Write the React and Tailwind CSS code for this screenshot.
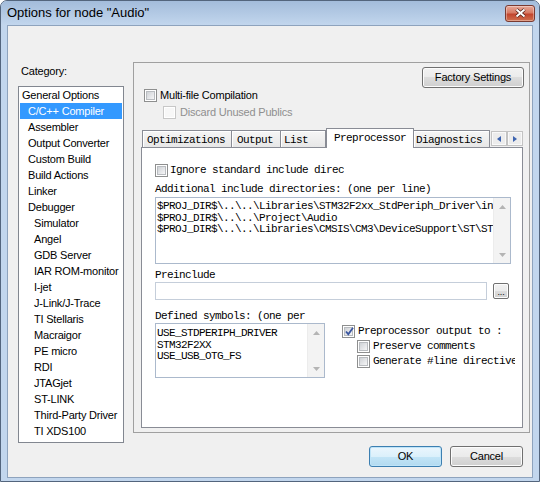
import React from 'react';

const ui = "font-['Liberation_Sans',Arial,sans-serif] text-[11px] tracking-[-0.2px] text-black";
const mono = "font-['Liberation_Mono','Courier_New',monospace] text-[11px] tracking-[-0.6px] text-black";

const categories = [
  ['General Options', 0],
  ['C/C++ Compiler', 1],
  ['Assembler', 1],
  ['Output Converter', 1],
  ['Custom Build', 1],
  ['Build Actions', 1],
  ['Linker', 1],
  ['Debugger', 1],
  ['Simulator', 2],
  ['Angel', 2],
  ['GDB Server', 2],
  ['IAR ROM-monitor', 2],
  ['I-jet', 2],
  ['J-Link/J-Trace', 2],
  ['TI Stellaris', 2],
  ['Macraigor', 2],
  ['PE micro', 2],
  ['RDI', 2],
  ['JTAGjet', 2],
  ['ST-LINK', 2],
  ['Third-Party Driver', 2],
  ['TI XDS100', 2],
];

const indent = ['pl-[2px]', 'pl-[8px]', 'pl-[14px]'];

const tabs = [
  { label: 'Optimizations', cls: 'w-[90px] pl-[4px] border-l' },
  { label: 'Output', cls: 'w-[49px] pl-[5px]' },
  { label: 'List', cls: 'w-[45px] pl-[3px]' },
  { label: 'Preprocessor', cls: 'w-[88px] pl-[7px]', active: true },
  { label: 'Diagnostics', cls: 'w-[76px] pl-[2px]' },
];

const includeDirs = [
  '$PROJ_DIR$\\..\\..\\Libraries\\STM32F2xx_StdPeriph_Driver\\inc',
  '$PROJ_DIR$\\..\\..\\Project\\Audio',
  '$PROJ_DIR$\\..\\..\\Libraries\\CMSIS\\CM3\\DeviceSupport\\ST\\STM32F2xx',
];

const symbols = ['USE_STDPERIPH_DRIVER', 'STM32F2XX', 'USE_USB_OTG_FS'];

function CheckBox({ checked = false, disabled = false }) {
  return (
    <span
      className={`relative flex h-[13px] w-[13px] shrink-0 items-center justify-center border bg-white ${
        disabled ? 'border-[#c7c7c7]' : 'border-[#8e8f8f]'
      }`}
    >
      {disabled ? (
        <span className="h-[9px] w-[9px] bg-[#f7f7f7]" />
      ) : (
        <span className="h-[9px] w-[9px] border border-[#b9bcc0] bg-gradient-to-br from-[#cfd2d6] to-[#f6f6f7]" />
      )}
      {checked && (
        <svg className="absolute left-[1px] top-[0px]" width="11" height="11" viewBox="0 0 11 11">
          <path d="M2 5.5 L4.3 8.2 L9 1.8" fill="none" stroke="#3a56a0" strokeWidth="1.8" />
        </svg>
      )}
    </span>
  );
}

function Button({ children, primary = false, className = '' }) {
  return (
    <div
      className={`flex items-center justify-center rounded-[3px] border ${ui} ${
        primary
          ? 'border-[#3c7fb1] bg-[linear-gradient(#ebf6fd,#dbf0fb_50%,#c3e5f7_50%,#b2daf0)] shadow-[inset_0_0_0_1px_#bfe4f8]'
          : 'border-[#707070] bg-[linear-gradient(#f2f2f2,#ebebeb_50%,#dddddd_50%,#cfcfcf)] shadow-[inset_0_0_0_1px_#fcfcfc]'
      } ${className}`}
    >
      {children}
    </div>
  );
}

function ScrollBar() {
  return (
    <div className="flex w-[17px] shrink-0 flex-col justify-between border-l border-[#ececec] bg-[#f3f3f3]">
      <div className="flex h-[17px] items-center justify-center">
        <svg width="7" height="4" viewBox="0 0 7 4">
          <path d="M0 4 L3.5 0 L7 4 Z" fill="#b4b4b4" />
        </svg>
      </div>
      <div className="flex h-[17px] items-center justify-center">
        <svg width="7" height="4" viewBox="0 0 7 4">
          <path d="M0 0 L3.5 4 L7 0 Z" fill="#b4b4b4" />
        </svg>
      </div>
    </div>
  );
}

function TabArrow({ left = false }) {
  return (
    <div className="flex h-[15px] w-[16px] items-center justify-center border border-[#c3c3c3] bg-[#ececec] shadow-[inset_0_0_0_1px_#f9f9f9]">
      <svg width="4" height="6" viewBox="0 0 4 6">
        <path d={left ? 'M4 0 L0 3 L4 6 Z' : 'M0 0 L4 3 L0 6 Z'} fill="#3d64b0" />
      </svg>
    </div>
  );
}

export default function App() {
  return (
    <div className="flex h-[482px] w-[540px] flex-col overflow-hidden rounded-t-[7px] border border-[#53657d] bg-[#c2d6ed]">
      {/* title bar */}
      <div className="flex h-[24px] shrink-0 items-center justify-between bg-gradient-to-b from-[#a3bcdb] to-[#c2d6ed] pl-[6px] pr-[4px]">
        <span className="font-['Liberation_Sans',Arial,sans-serif] text-[13px] text-black">
          Options for node "Audio"
        </span>
        <div className="flex h-[17px] w-[30px] items-center justify-center rounded-[3px] border border-[#7a3a31] bg-[linear-gradient(#e8a898,#d77a64_45%,#c2452e_55%,#d0704f)] shadow-[inset_0_0_0_1px_rgba(255,255,255,0.35)]">
          <svg width="13" height="10" viewBox="0 0 13 10">
            <path d="M2.5 1.5 L10.5 8.5 M10.5 1.5 L2.5 8.5" stroke="#4b1a12" strokeWidth="3.4" />
            <path d="M2.5 1.5 L10.5 8.5 M10.5 1.5 L2.5 8.5" stroke="#ffffff" strokeWidth="2" />
          </svg>
        </div>
      </div>

      {/* client area */}
      <div className="mx-[6px] mb-[3px] flex flex-1 border border-[#8ea3bd] bg-[#f0f0f0]">
        {/* category list */}
        <div className="ml-[10px] flex w-[106px] flex-col pt-[38px]">
          <div className={`h-[14px] pl-[3px] leading-[14px] ${ui}`}>Category:</div>
          <div className="mt-[8px] h-[357px] border border-[#828790] bg-white">
            {categories.map(([name, level], i) => (
              <div
                key={name}
                className={`mx-[1px] h-[16px] leading-[16px] ${indent[level]} ${ui} ${
                  i === 1 ? 'bg-[#3399ff] !text-white' : ''
                }`}
              >
                {name}
              </div>
            ))}
          </div>
        </div>

        {/* right side */}
        <div className="ml-[9px] flex flex-1 flex-col pt-[36px]">
          <div className="flex h-[371px] w-[397px] flex-col border border-[#a0a0a0]">
            <div className="flex justify-end pr-[5px] pt-[4px]">
              <Button className="h-[21px] w-[102px]">Factory Settings</Button>
            </div>

            <div className="mt-[1px] flex h-[13px] items-center gap-[3px] pl-[10px]">
              <CheckBox />
              <span className={ui}>Multi-file Compilation</span>
            </div>
            <div className="mt-[4px] flex h-[13px] items-center gap-[4px] pl-[29px]">
              <CheckBox disabled />
              <span className={`${ui} !text-[#8f8f8f]`}>Discard Unused Publics</span>
            </div>

            {/* tab strip */}
            <div className="ml-[7px] mt-[9px] flex h-[19px] w-[382px] items-end">
              <div className="w-[1px]" />
              {tabs.map((t) => (
                <div
                  key={t.label}
                  className={`${t.cls} ${mono} ${
                    t.active
                      ? 'relative z-10 -mb-[1px] h-[20px] border-l border-r border-t border-[#898c95] bg-white pt-[2px] leading-[14px]'
                      : 'h-[17px] border-r border-t border-[#898c95] bg-[linear-gradient(#f6f6f6,#e7e7e7)] pt-[2px] leading-[14px] shadow-[inset_1px_1px_0_#ffffff]'
                  }`}
                >
                  {t.label}
                </div>
              ))}
              <div className="mb-[1px] ml-auto flex">
                <TabArrow left />
                <TabArrow />
              </div>
            </div>

            {/* tab page */}
            <div className="ml-[7px] flex h-[281px] w-[382px] flex-col self-start border border-[#898c95] bg-white">
              <div className="ml-[13px] mt-[16px] flex h-[13px] items-center gap-[2px]">
                <CheckBox />
                <span className={`w-[174px] overflow-hidden whitespace-nowrap ${mono}`}>
                  Ignore standard include directories
                </span>
              </div>

              <div className={`ml-[13px] mt-[6px] h-[12px] leading-[12px] whitespace-nowrap ${mono}`}>
                Additional include directories: (one per line)
              </div>
              <div className="ml-[13px] mt-[2px] flex h-[67px] w-[356px] border border-[#abb9cc] bg-white">
                <div className={`flex-1 overflow-hidden pl-[1px] pt-[3px] leading-[11.5px] whitespace-pre ${mono}`}>
                  {includeDirs.map((d) => (
                    <div key={d}>{d}</div>
                  ))}
                </div>
                <ScrollBar />
              </div>

              <div className={`ml-[13px] mt-[5px] h-[12px] leading-[12px] ${mono}`}>Preinclude</div>
              <div className="ml-[13px] mt-[1px] flex items-start">
                <div className="h-[18px] w-[332px] border border-[#c5ceda] bg-white" />
                <Button className="ml-[6px] mt-[1px] h-[16px] w-[16px] !items-end !rounded-[2px] pb-[1px] !text-[9px] leading-[9px]">
                  ...
                </Button>
              </div>

              <div className="ml-[13px] mt-[10px] flex">
                <div className="flex w-[170px] flex-col">
                  <div className={`h-[12px] whitespace-nowrap leading-[12px] ${mono}`}>
                    Defined symbols: (one per
                  </div>
                  <div className="mt-[1px] flex h-[55px] border border-[#abb9cc] bg-white">
                    <div className={`flex-1 overflow-hidden pl-[1px] pt-[4px] leading-[11.5px] whitespace-pre ${mono}`}>
                      {symbols.map((s) => (
                        <div key={s}>{s}</div>
                      ))}
                    </div>
                    <ScrollBar />
                  </div>
                </div>

                <div className="ml-[17px] flex flex-col gap-[2px] pt-[15px]">
                  <div className="flex h-[13px] items-center gap-[3px]">
                    <CheckBox checked />
                    <span className={`whitespace-nowrap ${mono}`}>Preprocessor output to :</span>
                  </div>
                  <div className="flex h-[13px] items-center gap-[3px] pl-[15px]">
                    <CheckBox />
                    <span className={`whitespace-nowrap ${mono}`}>Preserve comments</span>
                  </div>
                  <div className="flex h-[13px] items-center gap-[3px] pl-[15px]">
                    <CheckBox />
                    <span className={`w-[142px] overflow-hidden whitespace-nowrap ${mono}`}>
                      Generate #line directives
                    </span>
                  </div>
                </div>
              </div>
            </div>
          </div>

          {/* dialog buttons */}
          <div className="mt-[13px] flex justify-end gap-[8px] pr-[9px]">
            <Button primary className="h-[21px] w-[73px]">OK</Button>
            <Button className="h-[21px] w-[73px]">Cancel</Button>
          </div>
        </div>
      </div>
    </div>
  );
}
